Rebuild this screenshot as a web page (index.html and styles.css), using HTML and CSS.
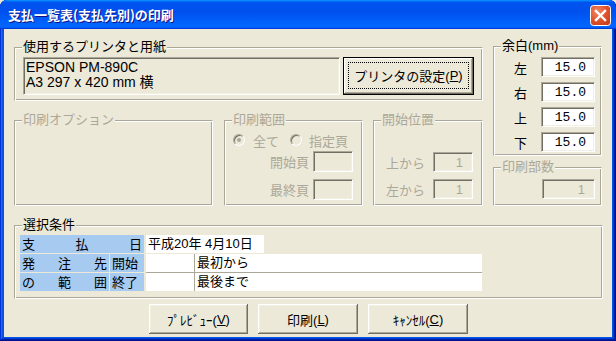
FILE: index.html
```html
<!DOCTYPE html>
<html lang="ja">
<head>
<meta charset="utf-8">
<title>支払一覧表(支払先別)の印刷</title>
<link rel="stylesheet" href="styles.css">
</head>
<body>
<div class="window">
  <div class="titlebar">
    <span class="title">支払一覧表(支払先別)の印刷</span>
    <span class="close">
      <svg width="21" height="21" viewBox="0 0 21 21">
        <defs>
          <radialGradient id="cg" cx="0.35" cy="0.3" r="0.9">
            <stop offset="0" stop-color="#f08a6a"/>
            <stop offset="0.5" stop-color="#e0532c"/>
            <stop offset="1" stop-color="#c23a15"/>
          </radialGradient>
        </defs>
        <rect x="0.5" y="0.5" width="20" height="20" rx="3" ry="3" fill="url(#cg)" stroke="#fff"/>
        <path d="M6 6 L15 15 M15 6 L6 15" stroke="#fff" stroke-width="2.4" stroke-linecap="square"/>
      </svg>
    </span>
  </div>
  <div class="client">
    <div class="top">
      <div class="leftcol">
        <div class="group g-printer">
          <span class="glabel">使用するプリンタと用紙</span>
          <div class="printer-box">EPSON PM-890C<br>A3 297 x 420 mm 横</div>
          <div class="btn btn-default btn-printer"><span class="focus">プリンタの設定(<u>P</u>)</span></div>
        </div>
        <div class="row3">
          <div class="group g-options disabled"><span class="glabel">印刷オプション</span></div>
          <div class="group g-range disabled">
            <span class="glabel">印刷範囲</span>
            <div class="radios">
              <span class="radio checked"></span><span class="rtext">全て</span>
              <span class="radio r2"></span><span class="rtext">指定頁</span>
            </div>
            <div class="field f1"><span>開始頁</span><span class="input dis w40"></span></div>
            <div class="field f2"><span>最終頁</span><span class="input dis w40"></span></div>
          </div>
          <div class="group g-start disabled">
            <span class="glabel">開始位置</span>
            <div class="field s1"><span>上から</span><span class="input dis w40">1</span></div>
            <div class="field s2"><span>左から</span><span class="input dis w40">1</span></div>
          </div>
        </div>
      </div>
      <div class="rightcol">
        <div class="group g-margin">
          <span class="glabel">余白(mm)</span>
          <div class="mrow"><span>左</span><span class="input en">15.0</span></div>
          <div class="mrow"><span>右</span><span class="input en">15.0</span></div>
          <div class="mrow"><span>上</span><span class="input en">15.0</span></div>
          <div class="mrow"><span>下</span><span class="input en">15.0</span></div>
        </div>
        <div class="group g-copies disabled">
          <span class="glabel">印刷部数</span>
          <div class="mrow"><span class="input dis">1</span></div>
        </div>
      </div>
    </div>
    <div class="group g-select">
      <span class="glabel">選択条件</span>
      <div class="table">
        <div class="trow1">
          <div class="blue jl w124"><span>支</span><span>払</span><span>日</span></div>
          <div class="white datev">平成20年 4月10日</div>
        </div>
        <div class="tblock">
          <div class="bcol c89">
            <div class="blue jl"><span>発</span><span>注</span><span>先</span></div>
            <div class="blue jl"><span>の</span><span>範</span><span>囲</span></div>
          </div>
          <div class="bcol c34">
            <div class="blue sl">開始</div>
            <div class="blue sl">終了</div>
          </div>
          <div class="wblock">
            <div class="white"></div><div class="white wtext">最初から</div>
            <div class="white"></div><div class="white wtext">最後まで</div>
          </div>
        </div>
      </div>
    </div>
    <div class="buttons">
      <div class="btn b99">ﾌﾟﾚﾋﾞｭｰ(<u>V</u>)</div>
      <div class="btn b100">印刷(<u>L</u>)</div>
      <div class="btn b100">ｷｬﾝｾﾙ(<u>C</u>)</div>
    </div>
  </div>
</div>
</body>
</html>
```

FILE: styles.css
```css
* {
  box-sizing: border-box;
  margin: 0;
  padding: 0;
}

body {
  margin: 0;
  background: #ece9d8;
  font-family: "Liberation Sans", "Noto Sans CJK JP", sans-serif;
  font-size: 13px;
  color: #000;
}

.window {
  width: 616px;
  height: 341px;
  display: flex;
  flex-direction: column;
  background: #0054e3;
  border-radius: 7px 7px 0 0;
  overflow: hidden;
  box-shadow: inset -1px -1px #00138c, inset 1px 1px #0831d9,
    inset -2px -2px #001ea0, inset 2px 2px #166aee,
    inset -3px -3px #003bda, inset 3px 3px #0855dd;
}

.titlebar {
  height: 29px;
  flex: none;
  display: flex;
  align-items: center;
  padding: 0 5px 0 8px;
  background: linear-gradient(180deg, #0997ff, #0053ee 8%, #0050ee 40%, #0066ff 88%, #0066ff 93%, #005bff 95%, #003dd7 96%, #003dd7);
  border-radius: 7px 7px 0 0;
}

.title {
  flex: 1;
  color: #fff;
  font-family: "Noto Sans CJK JP", sans-serif;
  font-weight: bold;
  font-size: 13px;
  line-height: 16px;
  text-shadow: 1px 1px #0f1089;
}

.close {
  width: 21px;
  height: 21px;
  display: block;
  margin-top: 1px;
}

.close svg {
  display: block;
}

.client {
  flex: 1;
  margin: 0 4px 4px 4px;
  background: #ece9d8;
  padding-left: 10px;
}

.top {
  display: flex;
  gap: 10px;
  margin-top: 17px;
}

.leftcol {
  width: 469px;
  margin-top: 1px;
}

.rightcol {
  width: 109px;
}

.group {
  position: relative;
  border: 1px solid #aca899;
  border-right-color: #fff;
  border-bottom-color: #fff;
  box-shadow: inset 1px 1px #fff, inset -1px -1px #aca899;
}

.glabel {
  position: absolute;
  top: -9px;
  left: 7px;
  padding: 0 1px;
  background: #ece9d8;
  line-height: 16px;
  white-space: nowrap;
  font-size: 13px;
}

.disabled,
.disabled .glabel {
  color: #aca899;
}

.g-printer {
  height: 54px;
  display: flex;
  gap: 3px;
  padding: 9px 0 0 8px;
}

.printer-box {
  width: 317px;
  height: 38px;
  font-size: 14px;
  line-height: 15px;
  padding: 2px 0 0 2px;
  border: 1px solid;
  border-color: #aca899 #fff #fff #aca899;
  box-shadow: inset 1px 1px #716f64, inset -1px -1px #f1efe2;
  white-space: nowrap;
}

.btn {
  display: flex;
  align-items: center;
  justify-content: center;
  background: #ece9d8;
  height: 30px;
  box-shadow: inset -1px -1px #716f64, inset 1px 1px #fff,
    inset -2px -2px #aca899, inset 2px 2px #f1efe2;
  font-size: 13px;
  white-space: nowrap;
}

.btn u {
  text-decoration: underline;
  text-underline-offset: 1px;
}

.btn-default {
  border: 1px solid #000;
}

.btn-printer {
  width: 131px;
  height: 38px;
  position: relative;
}

.btn-printer .focus {
  position: absolute;
  inset: 4px 4px 5px 4px;
  border: 1px dotted #000;
  display: flex;
  align-items: center;
  justify-content: center;
}

.row3 {
  display: flex;
  margin-top: 19px;
  height: 86px;
}

.g-options {
  width: 199px;
  height: 86px;
}

.g-range {
  width: 139px;
  height: 86px;
  margin-left: 11px;
  padding: 11px 9px 0 8px;
}

.g-start {
  width: 110px;
  height: 86px;
  margin-left: 10px;
  padding: 31px 9px 0 0;
}

.radios {
  display: flex;
  align-items: center;
  height: 16px;
  white-space: nowrap;
}

.radio {
  width: 12px;
  height: 12px;
  flex: none;
  border-radius: 50%;
  background: #ece9d8;
  border: 1px solid;
  border-color: #aca899 #fff #fff #aca899;
  box-shadow: inset 1px 1px #716f64;
  display: flex;
  align-items: center;
  justify-content: center;
}

.radio.checked::after {
  content: "";
  width: 4px;
  height: 4px;
  border-radius: 50%;
  background: #aca899;
}

.rtext {
  margin-left: 8px;
}

.radio.r2 {
  margin-left: 11px;
}

.radio.r2 + .rtext {
  margin-left: 7px;
}

.field {
  display: flex;
  justify-content: flex-end;
  align-items: center;
  gap: 4px;
  height: 21px;
  white-space: nowrap;
}

.field.f1 {
  margin-top: 3px;
}

.field.f2 {
  margin-top: 7px;
}

.g-start .field {
  gap: 8px;
  height: 20px;
}

.g-start .field.s2 {
  margin-top: 7px;
}

.input {
  display: flex;
  align-items: center;
  justify-content: flex-end;
  height: 100%;
  padding-right: 9px;
  border: 1px solid;
  border-color: #aca899 #fff #fff #aca899;
  box-shadow: inset 1px 1px #716f64, inset -1px -1px #f1efe2;
  font-family: "Liberation Mono", "Noto Sans CJK JP", monospace;
  font-size: 13px;
}

.input.en {
  background: #fff;
  width: 54px;
  padding-right: 8px;
  color: #000;
}

.input.dis {
  background: #ece9d8;
  color: #aca899;
  font-family: "Liberation Sans", sans-serif;
  width: 53px;
}

.input.w40 {
  width: 40px;
}

.g-margin {
  height: 110px;
  display: flex;
  flex-direction: column;
  gap: 5px;
  padding: 10px 6px 0 0;
}

.mrow {
  display: flex;
  justify-content: flex-end;
  align-items: center;
  gap: 14px;
  height: 20px;
}

.g-copies {
  height: 39px;
  margin-top: 11px;
  padding: 11px 6px 0 0;
}

.g-select {
  width: 589px;
  height: 74px;
  margin-top: 19px;
  padding: 9px 0 0 5px;
}

.table {
  width: 462px;
  display: flex;
  flex-direction: column;
  gap: 1px;
}

.trow1 {
  display: flex;
  gap: 2px;
  height: 18px;
}

.blue {
  background: #a6caf0;
  height: 18px;
  line-height: 18px;
  font-family: "Noto Sans CJK JP", sans-serif;
  font-size: 13px;
}

.white {
  background: #fff;
  height: 18px;
  line-height: 18px;
  font-size: 13px;
  white-space: nowrap;
}

.jl {
  display: flex;
  justify-content: space-between;
  padding: 0 2px;
}

.w124 {
  width: 124px;
}

.datev {
  width: 118px;
  padding-left: 2px;
}

.tblock {
  display: flex;
  height: 37px;
}

.bcol {
  display: flex;
  flex-direction: column;
  gap: 1px;
}

.c89 {
  width: 89px;
}

.c34 {
  width: 34px;
  margin-left: 1px;
}

.sl {
  padding-left: 2px;
}

.wblock {
  width: 336px;
  margin-left: 2px;
  display: grid;
  grid-template-columns: 48px 287px;
  grid-template-rows: 18px 18px;
  gap: 1px;
  background: #aca899;
}

.wtext {
  padding-left: 2px;
}

.buttons {
  display: flex;
  gap: 10px;
  margin-top: 5px;
  padding-left: 135px;
}

.b99 {
  width: 99px;
}

.b100 {
  width: 100px;
}
```
